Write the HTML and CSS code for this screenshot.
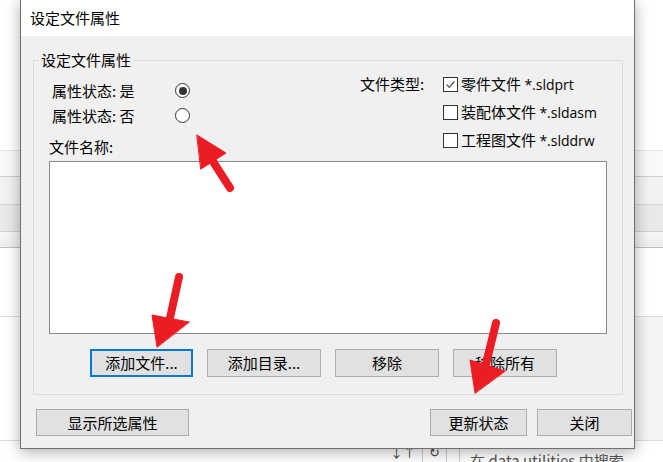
FILE: index.html
```html
<!DOCTYPE html>
<html lang="zh-CN">
<head>
<meta charset="utf-8">
<title>设定文件属性</title>
<link rel="stylesheet" href="styles.css">
</head>
<body>
<div class="desktop">
  <div class="bg-app">
    <div class="bg-row r0"></div>
    <div class="bg-row r1"></div>
    <div class="bg-row r2"></div>
    <div class="bg-row r3"></div>
    <div class="bg-row r4"></div>
    <div class="bg-row r5"></div>
    <div class="bg-row r6"></div>
    <div class="bg-row r7">
      <span class="tool">↓↑</span>
      <span class="sep"></span>
      <span class="tool">↻</span>
      <span class="sep"></span>
      <span class="sep gap"></span>
      <span class="search">在 data utilities 中搜索</span>
    </div>
  </div>

  <div class="dialog">
    <div class="titlebar">设定文件属性</div>
    <div class="body">
      <fieldset class="group">
        <legend>设定文件属性</legend>
        <div class="group-inner">
          <div class="top">
            <div class="left-col">
              <div class="radio-row"><span class="radio-label">属性状态: 是</span><span class="radio checked"></span></div>
              <div class="radio-row"><span class="radio-label">属性状态: 否</span><span class="radio"></span></div>
              <div class="list-label">文件名称:</div>
            </div>
            <div class="types">
              <div class="types-label">文件类型:</div>
              <div class="checks">
                <div class="check-row"><span class="checkbox checked"><svg viewBox="0 0 15 15" width="15" height="15"><path d="M3.5 7.5 L6.2 10.2 L11.5 4.5" fill="none" stroke="#606060" stroke-width="1.3"/></svg></span><span>零件文件 <span class="ext">*.sldprt</span></span></div>
                <div class="check-row"><span class="checkbox"></span><span>装配体文件 <span class="ext">*.sldasm</span></span></div>
                <div class="check-row"><span class="checkbox"></span><span>工程图文件 <span class="ext">*.slddrw</span></span></div>
              </div>
            </div>
          </div>
          <div class="listbox"></div>
          <div class="list-buttons">
            <button class="btn focused w103">添加文件...</button>
            <button class="btn w114">添加目录...</button>
            <button class="btn w104">移除</button>
            <button class="btn w104">移除所有</button>
          </div>
        </div>
      </fieldset>
      <div class="footer">
        <button class="btn w153">显示所选属性</button>
        <div class="footer-right">
          <button class="btn w97">更新状态</button>
          <button class="btn w95">关闭</button>
        </div>
      </div>
    </div>
  </div>

  <svg class="arrows" width="663" height="462" viewBox="0 0 663 462">
    <g fill="#ec1c24" stroke="#ec1c24" stroke-linecap="round">
      <line x1="230" y1="188" x2="212" y2="160" stroke-width="8"/>
      <polygon points="197,135 226,153 201,169" stroke-width="1"/>
      <line x1="179" y1="277" x2="170" y2="318" stroke-width="8"/>
      <polygon points="157,347 152,315 189,322" stroke-width="1"/>
      <line x1="496" y1="323" x2="486" y2="364" stroke-width="8"/>
      <polygon points="475,393 470,360 505,371" stroke-width="1"/>
    </g>
  </svg>
</div>
</body>
</html>
```

FILE: styles.css
```css
html, body {
  margin: 0;
  padding: 0;
}
body {
  width: 663px;
  height: 462px;
  overflow: hidden;
  font-family: "Noto Sans CJK SC", "Noto Sans", sans-serif;
}
.desktop {
  position: relative;
  width: 663px;
  height: 462px;
  background: #ffffff;
  overflow: hidden;
}

/* background application */
.bg-app {
  display: flex;
  flex-direction: column;
}
.bg-row {
  box-sizing: border-box;
  border-bottom: 1px solid #d9d9d9;
}
.r0 { height: 151px; background: #ffffff; border-bottom-color: #e4e4e4; }
.r1 { height: 26px; background: #f9f9f9; border-bottom-color: #cfcfcf; }
.r2 { height: 28px; background: #f2f2f2; border-bottom-color: #d4d4d4; }
.r3 { height: 27px; background: #e9e9e9; border-bottom-color: #d0d0d0; }
.r4 { height: 16px; background: linear-gradient(#f7f7f7, #ececec); border-bottom-color: #bdbdbd; }
.r5 { height: 69px; background: #ffffff; border-bottom-color: #dcdcdc; }
.r6 { height: 124px; background: linear-gradient(90deg, #ffffff 0%, #ffffff 90%, #f3f4f6 95%); border-bottom-color: #dadada; }
.r7 {
  height: 30px;
  display: flex;
  align-items: flex-start;
  padding-left: 386px;
  padding-top: 4px;
  box-sizing: border-box;
  color: #555555;
  font-size: 15px;
  border-bottom: none;
}
.tool {
  font-size: 13px;
  line-height: 14px;
  padding: 0 4px;
  color: #444;
}
.sep {
  width: 1px;
  height: 22px;
  background: #cfcfcf;
  margin: -4px 2px 0;
}
.sep.gap { margin-left: 10px; }
.search {
  margin-left: 8px;
  line-height: 22px;
  margin-top: 5px;
  color: #555;
}

/* dialog */
.dialog {
  position: absolute;
  left: 20px;
  top: -1px;
  width: 613px;
  border: 1px solid #707070;
  background: #f0f0f0;
  box-shadow: 0 3px 14px rgba(0, 0, 0, 0.32);
  font-size: 15px;
  line-height: 20px;
  color: #000;
}
.titlebar {
  height: 36px;
  line-height: 36px;
  background: #ffffff;
  padding-left: 9px;
}
.body {
  padding: 14px 0 12px;
}
.group {
  margin: 0 11px 0 12px;
  padding: 0;
  border: 1px solid #dcdcdc;
  min-width: 0;
}
.group legend {
  margin-left: 5px;
  padding: 0 2px;
  line-height: 20px;
}
.group-inner {
  padding: 0 15px 17px 15px;
}
.top {
  display: flex;
}
.left-col {
  width: 311px;
  padding-top: 8px;
}
.radio-row {
  display: flex;
  align-items: center;
  height: 25px;
  padding-left: 3px;
}
.radio-label {
  width: 123px;
}
.radio {
  box-sizing: border-box;
  width: 15px;
  height: 15px;
  border: 1px solid #333333;
  border-radius: 50%;
  background: #ffffff;
  display: flex;
  align-items: center;
  justify-content: center;
}
.radio.checked::after {
  content: "";
  width: 8px;
  height: 8px;
  border-radius: 50%;
  background: #333333;
}
.list-label {
  margin-top: 9px;
  height: 20px;
}
.types {
  display: flex;
}
.types-label {
  width: 83px;
  line-height: 28px;
}
.check-row {
  display: flex;
  align-items: center;
  height: 28px;
}
.checkbox {
  box-sizing: border-box;
  width: 15px;
  height: 15px;
  border: 1px solid #333333;
  background: #ffffff;
  margin-right: 3px;
  display: flex;
}
.checkbox svg {
  margin: -1px;
}
.ext {
  font-family: "Open Sans", "Noto Sans", sans-serif;
  font-size: 14px;
}
.listbox {
  box-sizing: border-box;
  margin-top: 4px;
  height: 173px;
  border: 1px solid #828790;
  background: #ffffff;
}
.list-buttons {
  display: flex;
  gap: 14px;
  margin-top: 15px;
  padding-left: 41px;
}
.btn {
  box-sizing: border-box;
  height: 28px;
  padding: 0;
  border: 1px solid #adadad;
  background: #e1e1e1;
  font-family: "Noto Sans CJK SC", "Noto Sans", sans-serif;
  font-size: 15px;
  line-height: 20px;
  color: #000;
  text-align: center;
}
.btn.focused {
  border: 2px solid #0078d7;
}
.w103 { width: 103px; }
.w114 { width: 114px; }
.w104 { width: 104px; }
.w153 { width: 153px; }
.w97 { width: 97px; }
.w95 { width: 95px; }
.footer {
  display: flex;
  justify-content: space-between;
  margin-top: 14px;
  padding: 0 2px 0 15px;
}
.footer .btn {
  height: 27px;
}
.footer-right {
  display: flex;
  gap: 10px;
}

/* annotation arrows overlay */
.arrows {
  position: absolute;
  left: 0;
  top: 0;
  pointer-events: none;
}
```
